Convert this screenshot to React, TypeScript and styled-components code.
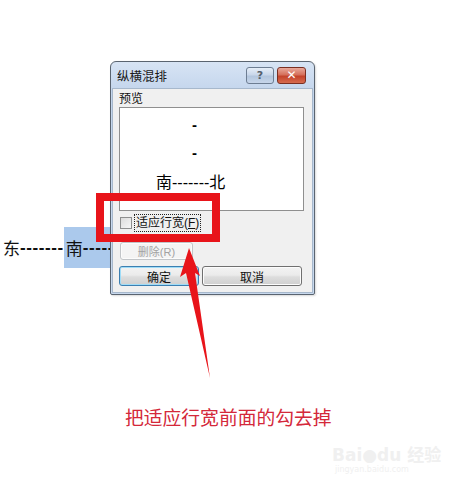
import React from "react";
import styled, { createGlobalStyle } from "styled-components";

const Global = createGlobalStyle`
  html, body { margin: 0; padding: 0; background: #fff; }
  body { font-family: "Noto Sans CJK SC", "Noto Sans", sans-serif; }
`;

const CJK = `"Liberation Sans", "Noto Sans CJK SC", sans-serif`;

const Canvas = styled.div`
  position: relative;
  width: 472px;
  height: 489px;
  background: #fff;
  overflow: hidden;
  font-family: ${CJK};
`;

const BackLine = styled.div`
  position: absolute;
  left: 3px;
  top: 227px;
  height: 41px;
  display: flex;
  align-items: center;
  font-size: 17px;
  color: #111;
  white-space: nowrap;
`;

const Dashes = styled.span`
  letter-spacing: 0.6px;
  font-weight: bold;
`;

const Highlight = styled.span`
  display: flex;
  align-items: center;
  height: 41px;
  background: #abc9ec;
  padding-left: 2px;
  padding-right: 20px;
`;

const Window = styled.div`
  position: absolute;
  left: 110px;
  top: 61px;
  width: 205px;
  height: 234px;
  box-sizing: border-box;
  border: 1px solid #5a6470;
  border-radius: 6px 6px 2px 2px;
  background: linear-gradient(#d7e4f4, #c3d5ec 30px, #c8d9ee);
  display: flex;
  flex-direction: column;
  box-shadow: 1px 1px 2px rgba(0, 0, 0, 0.15);
`;

const TitleBar = styled.div`
  height: 26px;
  display: flex;
  align-items: center;
  padding: 0 8px 0 6px;
`;

const Title = styled.div`
  flex: 1;
  font-size: 12.5px;
  color: #1a1a1a;
  padding-top: 1px;
`;

const CapButton = styled.div<{ $close?: boolean }>`
  width: ${(p) => (p.$close ? 29 : 28)}px;
  height: 17px;
  box-sizing: border-box;
  margin-left: 3px;
  border: 1px solid ${(p) => (p.$close ? "#7a2f22" : "#6d7d92")};
  border-radius: 3px;
  background: ${(p) =>
    p.$close
      ? "linear-gradient(#e9a99b, #d5705c 45%, #c4432b 55%, #d66b4e)"
      : "linear-gradient(#e6eef8, #c9d7ea 45%, #b3c6de 55%, #c7d6ea)"};
  display: flex;
  align-items: center;
  justify-content: center;
  color: ${(p) => (p.$close ? "#fff" : "#555f6c")};
  font-family: "DejaVu Sans", sans-serif;
  font-weight: bold;
  font-size: ${(p) => (p.$close ? 12 : 11)}px;
`;

const Body = styled.div`
  flex: 1;
  margin: 0 1px 1px 1px;
  border: 1px solid #a7b8cc;
  background: #f0f0f0;
  padding: 3px 10px 0 6px;
  display: flex;
  flex-direction: column;
  font-size: 12px;
  color: #111;
`;

const Label = styled.div`
  height: 15px;
  line-height: 15px;
  font-size: 12px;
`;

const Preview = styled.div`
  width: 185px;
  height: 104px;
  box-sizing: border-box;
  border: 1px solid #8f8f8f;
  background: #fff;
  display: flex;
  flex-direction: column;
`;

const PLine = styled.div<{ $left: number; $top: number; $size?: number }>`
  margin-left: ${(p) => p.$left}px;
  margin-top: ${(p) => p.$top}px;
  height: 18px;
  line-height: 18px;
  font-size: ${(p) => p.$size ?? 15}px;
  font-weight: ${(p) => (p.$size ? "normal" : "bold")};
  color: #000;
  white-space: nowrap;
`;

const CheckRow = styled.div`
  margin-top: 3px;
  height: 18px;
  display: flex;
  align-items: center;
`;

const Box = styled.span`
  width: 12px;
  height: 12px;
  margin-left: 1px;
  box-sizing: border-box;
  border: 1px solid #8e8f8f;
  background: linear-gradient(135deg, #dcdcdc, #f6f6f6);
`;

const Focus = styled.span`
  margin-left: 2px;
  padding: 0 1px;
  height: 16px;
  line-height: 16px;
  border: 1px dotted #222;
  font-size: 12px;
  white-space: nowrap;
`;

const Btn = styled.div<{ $w: number; $disabled?: boolean; $default?: boolean }>`
  width: ${(p) => p.$w}px;
  height: ${(p) => (p.$disabled ? 18 : 20)}px;
  box-sizing: border-box;
  border: 1px solid
    ${(p) => (p.$disabled ? "#c2c5c8" : p.$default ? "#3c7fb1" : "#707070")};
  border-radius: 3px;
  background: ${(p) =>
    p.$disabled
      ? "#f4f4f4"
      : "linear-gradient(#f3f3f3, #ebebeb 45%, #dddddd 55%, #cfcfcf)"};
  box-shadow: ${(p) => (p.$default ? "inset 0 0 0 1px #9fdcf7" : "inset 0 0 0 1px #fcfcfc")};
  display: flex;
  align-items: center;
  justify-content: center;
  font-size: ${(p) => (p.$disabled ? 11 : 12)}px;
  color: ${(p) => (p.$disabled ? "#a2a2a2" : "#111")};
  white-space: nowrap;
`;

const DelRow = styled.div`
  margin-top: 10px;
  margin-left: 1px;
  display: flex;
`;

const BtnRow = styled.div`
  margin-top: 6px;
  display: flex;
  gap: 3px;
`;

const RedFrame = styled.div`
  position: absolute;
  left: 96px;
  top: 193px;
  width: 124px;
  height: 49px;
  box-sizing: border-box;
  border: 8px solid #e8141a;
`;

const ArrowSvg = styled.svg`
  position: absolute;
  left: 0;
  top: 0;
  pointer-events: none;
`;

const Caption = styled.div`
  position: absolute;
  left: 125px;
  top: 405px;
  font-size: 18.8px;
  line-height: 24px;
  color: #d4283a;
  white-space: nowrap;
  font-family: "Noto Sans CJK SC", sans-serif;
`;

const Watermark = styled.div`
  position: absolute;
  left: 332px;
  top: 446px;
  display: flex;
  flex-direction: column;
  align-items: flex-start;
  color: #f0f0f0;
  font-family: "DejaVu Sans", "Noto Sans CJK SC", sans-serif;
`;

const WmTop = styled.div`
  font-size: 17px;
  font-weight: bold;
  line-height: 18px;
`;

const WmUrl = styled.div`
  font-size: 8px;
  line-height: 12px;
  margin-left: 3px;
`;

export default function App() {
  return (
    <>
      <Global />
      <Canvas>
        <BackLine>
          东<Dashes>-------</Dashes>
          <Highlight>
            南<Dashes>-----</Dashes>
          </Highlight>
        </BackLine>

        <Window>
          <TitleBar>
            <Title>纵横混排</Title>
            <CapButton>?</CapButton>
            <CapButton $close>✕</CapButton>
          </TitleBar>
          <Body>
            <Label>预览</Label>
            <Preview>
              <PLine $left={72} $top={8}>-</PLine>
              <PLine $left={72} $top={10}>-</PLine>
              <PLine $left={36} $top={12} $size={16}>
                南-------北
              </PLine>
            </Preview>
            <CheckRow>
              <Box />
              <Focus>
                适应行宽(<u>F</u>)
              </Focus>
            </CheckRow>
            <DelRow>
              <Btn $w={73} $disabled>
                删除(R)
              </Btn>
            </DelRow>
            <BtnRow>
              <Btn $w={81} $default>
                确定
              </Btn>
              <Btn $w={101}>取消</Btn>
            </BtnRow>
          </Body>
        </Window>

        <RedFrame />

        <ArrowSvg width="472" height="489" viewBox="0 0 472 489">
          <polygon
            points="189,248 200,276 195,273 210,378 186,273 180,277"
            fill="#e8141a"
          />
        </ArrowSvg>

        <Caption>把适应行宽前面的勾去掉</Caption>

        <Watermark>
          <WmTop>Bai●du 经验</WmTop>
          <WmUrl>jingyan.baidu.com</WmUrl>
        </Watermark>
      </Canvas>
    </>
  );
}
